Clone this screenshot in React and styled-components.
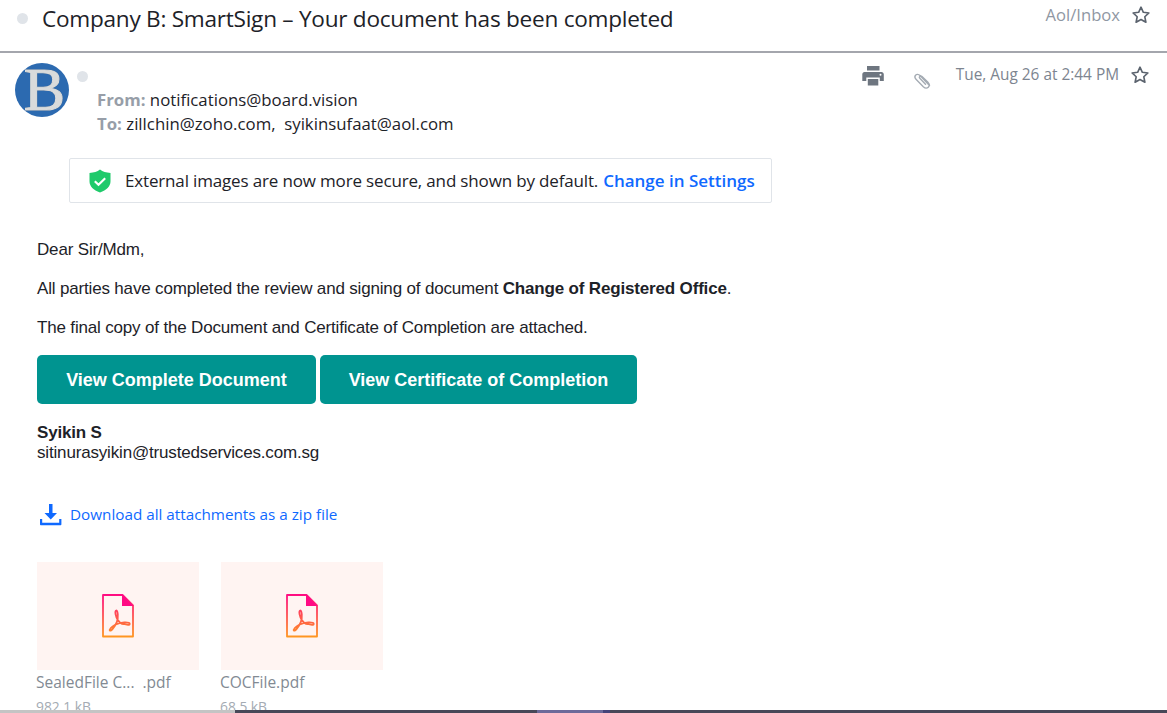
import React from "react";
import styled, { createGlobalStyle } from "styled-components";

const Global = createGlobalStyle`
  html, body { margin: 0; padding: 0; background: #fff; }
  body { font-family: "Open Sans", sans-serif; color: #1d2228; }
  * { box-sizing: border-box; }
`;
const Page = styled.div`
  width: 1167px; height: 713px; overflow: hidden;
  display: grid; grid-template-rows: 1fr 3px;
`;
const Main = styled.div`overflow: hidden; min-height: 0;`;
const Header = styled.header`
  height: 53px; display: flex; align-items: flex-start;
  border-bottom: 2px solid #a4a6ad; padding-left: 17px; position: relative;
`;
const Dot = styled.span`
  width: 11px; height: 11px; border-radius: 50%; background: #e0e4e9; flex: none;
`;
const HeaderDot = styled(Dot)`margin-top: 13px;`;
const Subject = styled.h1`
  margin: 5px 0 0 14px; font-size: 22.6px; line-height: 28px; font-weight: 400; color: #1d2228; flex: 1;
  letter-spacing: -0.26px;
`;
const Folder = styled.span`
  margin-top: 5px; font-size: 16.6px; line-height: 20px; color: #8f97a3;
`;
const StarBox = styled.svg`
  width: 20px; height: 20px; flex: none; fill: none; stroke: #5b636e; stroke-width: 1.6; stroke-linejoin: round;
`;
const HeaderStar = styled(StarBox)`margin: 5px 16px 0 11px;`;
const Meta = styled.section`
  height: 105px; display: flex; padding-left: 15px; position: relative;
`;
const Avatar = styled.svg`width: 54px; height: 54px; margin-top: 10px; flex: none;`;
const AvatarDot = styled(Dot)`margin: 18px 0 0 8px;`;
const People = styled.div`
  margin: 35px 0 0 9px; flex: 1; font-size: 16.8px; line-height: 24px; color: #1d2228;
`;
const Line = styled.div`white-space: pre; height: 24px;`;
const Label = styled.b`color: #979ea8; font-weight: 700;`;
const Tools = styled.div`
  display: flex; align-items: flex-start; padding-top: 10px; height: 40px;
`;
const PrintIcon = styled.svg`width: 24px; height: 24px; margin-top: 1px; fill: #6e7680;`;
const ClipIcon = styled.svg`
  width: 20px; height: 20px; margin: 7px 0 0 28px; fill: none; stroke: #a4abb3; stroke-width: 1.4; stroke-linecap: round;
`;
const DateText = styled.span`
  margin: 1px 0 0 23px; font-size: 15.4px; line-height: 22px; color: #7d8590;
`;
const DateStar = styled(StarBox)`margin: 2px 17px 0 11px;`;
const Notice = styled.div`
  margin-left: 69px; width: 703px; height: 45px; border: 1px solid #e0e4e9; border-radius: 2px;
  display: flex; align-items: center; padding-left: 19px; font-size: 17px; letter-spacing: -0.16px; color: #1d2228;
`;
const Shield = styled.svg`width: 22px; height: 24px; margin-right: 14px; flex: none;`;
const Link = styled.a`color: #0f69ff; text-decoration: none; white-space: pre;`;
const NoticeLink = styled(Link)`font-weight: 600; font-size: 17px; letter-spacing: 0; margin-left: 5px;`;
const Body = styled.div`
  padding: 38px 0 0 37px; font-family: "Liberation Sans", Arial, sans-serif; font-size: 17px; color: #1d2228;
  letter-spacing: -0.17px;
`;
const Para = styled.p`margin: 0 0 21px; line-height: 18px;`;
const Buttons = styled.div`display: flex; gap: 4px; margin-top: -3px;`;
const Button = styled.a`
  height: 49px; width: ${p => p.$w}px; background: #009490; color: #fff; border-radius: 5px; padding-top: 1px;
  display: flex; align-items: center; justify-content: center; font-weight: 700; font-size: 18px;
  letter-spacing: 0;
`;
const Sign = styled.div`margin-top: 19px; line-height: 20px;`;
const Download = styled.div`
  display: flex; align-items: center; gap: 8px; margin: 38px 0 0 2px; height: 26px;
  font-family: "Open Sans", sans-serif; font-size: 15.25px; letter-spacing: 0;
`;
const DownloadIcon = styled.svg`width: 23px; height: 23px; fill: #0f69ff; flex: none;`;
const Files = styled.div`
  display: flex; gap: 22px; margin-top: 35px; font-family: "Open Sans", sans-serif; letter-spacing: 0;
`;
const File = styled.div`width: 162px;`;
const Thumb = styled.div`
  height: 108px; background: #fff4f2; display: flex; align-items: center; justify-content: center;
`;
const FileName = styled.div`
  margin: 1px 0 0 -1px; font-size: 15.5px; line-height: 22px; font-weight: 500; color: #828a93; white-space: pre;
`;
const FileSize = styled.div`
  margin: 5px 0 0 -1px; font-size: 13.8px; line-height: 18px; color: #a4abb3;
`;
const Strip = styled.footer`display: flex; height: 3px;`;
const StripPart = styled.div`
  flex: ${p => (p.$w ? `0 0 ${p.$w}px` : 1)}; background: ${p => p.$c};
`;

const starPath = "M10 2.2l2.35 5.1 5.55.65-4.1 3.8 1.1 5.5L10 14.5l-4.9 2.75 1.1-5.5-4.1-3.8 5.55-.65z";
const Star = ({ as: C }) => <C viewBox="0 0 20 20"><path d={starPath} /></C>;

const Pdf = ({ id }) => (
  <svg width="32" height="44" viewBox="0 0 32 44">
    <defs>
      <linearGradient id={id} gradientUnits="userSpaceOnUse" x1="0" y1="0" x2="0" y2="44">
        <stop offset="0" stopColor="#ff0a84" />
        <stop offset="1" stopColor="#ff9a1e" />
      </linearGradient>
    </defs>
    <path d="M1 1h19.5L31 11.5V42.500H1z" fill="none" stroke={`url(#${id})`} strokeWidth="1.8" strokeLinejoin="round" />
    <path d="M20 .5L31.500 12H20z" fill="#ff0a84" />
    <path d="M14.200 16.500c-1.600 .6 -.8 5.500 1.800 9.800 2.500 4.200 4 3.700 6.500 3.900 3 .2 5.500 1.500 5.200 -.5 -.4 -1.900 -9 -1.700 -14.500 1 -4 2 -6 4.800 -5.300 5.800 1 1 4.600 -3 7 -8.700 1.600 -4 1 -11.900 -.7 -11.300z" fill="none" stroke={`url(#${id})`} strokeWidth="1.800" strokeLinejoin="round" />
  </svg>
);

export default function App() {
  return (
    <Page>
      <Global />
      <Main>
        <Header>
          <HeaderDot />
          <Subject>Company B: SmartSign – Your document has been completed</Subject>
          <Folder>Aol/Inbox</Folder>
          <Star as={HeaderStar} />
        </Header>
        <Meta>
          <Avatar viewBox="0 0 54 54">
            <circle cx="27" cy="27" r="27" fill="#2c6ab0" />
            <text x="29.500" y="47" textAnchor="middle" fontFamily="Liberation Serif" fontWeight="400" fontSize="62" fill="#d9dbdb" stroke="#d9dbdb" strokeWidth="1.100" style={{ filter: "drop-shadow(0.8px 0.8px 0 #123f73)" }}>B</text>
          </Avatar>
          <AvatarDot />
          <People>
            <Line><Label>From:</Label> notifications@board.vision</Line>
            <Line><Label>To:</Label> zillchin@zoho.com,  syikinsufaat@aol.com</Line>
          </People>
          <Tools>
            <PrintIcon viewBox="0 0 24 24">
              <path d="M6 2h12.500v4.500H6zM3.500 8h17c1.300 0 2.300 1 2.300 2.300V17h-4v-3.500H5.300V17h-4v-6.700C1.300 9 2.200 8 3.500 8zM6.800 15h10.500v6.500H6.800z" />
              <circle cx="19.500" cy="10.800" r="1" fill="#fff" />
            </PrintIcon>
            <ClipIcon viewBox="0 0 20 20">
              <path d="M16.500 15.500L7 5.500C5.500 4 3.500 4 2.600 5.200c-1 1.200-.8 2.800.4 4l7.300 7.500c1.600 1.500 3.700 1.700 5 .5 1.300-1.200 1.300-3-.1-4.600L9 6.600c-.7-.7-1.600-.8-2.200-.2-.6.600-.5 1.400.2 2.100l5.500 5.700" />
            </ClipIcon>
            <DateText>Tue, Aug 26 at 2:44 PM</DateText>
            <Star as={DateStar} />
          </Tools>
        </Meta>
        <Notice>
          <Shield viewBox="0 0 22 24">
            <path d="M11 .5c2.800 2.200 6 3.200 10.500 3.400v8.300c0 5.200-4 8.900-10.500 11.300C4.500 21.100.5 17.400.5 12.200V3.900C5 3.700 8.200 2.700 11 .5z" fill="#1fca6b" />
            <path d="M5.800 12.200l3.700 3.500 6.700-6.500" fill="none" stroke="#fff" strokeWidth="2.200" />
          </Shield>
          External images are now more secure, and shown by default.
          <NoticeLink>Change in Settings</NoticeLink>
        </Notice>
        <Body>
          <Para>Dear Sir/Mdm,</Para>
          <Para>All parties have completed the review and signing of document <b>Change of Registered Office</b>.</Para>
          <Para>The final copy of the Document and Certificate of Completion are attached.</Para>
          <Buttons>
            <Button $w={279}>View Complete Document</Button>
            <Button $w={317}>View Certificate of Completion</Button>
          </Buttons>
          <Sign>
            <b>Syikin S</b><br />
            sitinurasyikin@trustedservices.com.sg
          </Sign>
          <Download>
            <DownloadIcon viewBox="0 0 23 23">
              <path d="M10 1h3.500v9h4.500l-6.250 6.500L5.500 10H10zM1 16h2.200v3.800h17V16h2.200v5.200c0 .6-.5 1-1 1H2c-.5 0-1-.4-1-1z" />
            </DownloadIcon>
            <Link>Download all attachments as a zip file</Link>
          </Download>
          <Files>
            <File>
              <Thumb><Pdf id="pdfa" /></Thumb>
              <FileName>SealedFile C...  .pdf</FileName>
              <FileSize>982.1 kB</FileSize>
            </File>
            <File>
              <Thumb><Pdf id="pdfb" /></Thumb>
              <FileName>COCFile.pdf</FileName>
              <FileSize>68.5 kB</FileSize>
            </File>
          </Files>
        </Body>
      </Main>
      <Strip>
        <StripPart $w={235} $c="#c4c4c4" />
        <StripPart $w={302} $c="#484858" />
        <StripPart $w={66} $c="#6d6a9a" />
        <StripPart $w={7} $c="#45447a" />
        <StripPart $c="#484858" />
      </Strip>
    </Page>
  );
}
